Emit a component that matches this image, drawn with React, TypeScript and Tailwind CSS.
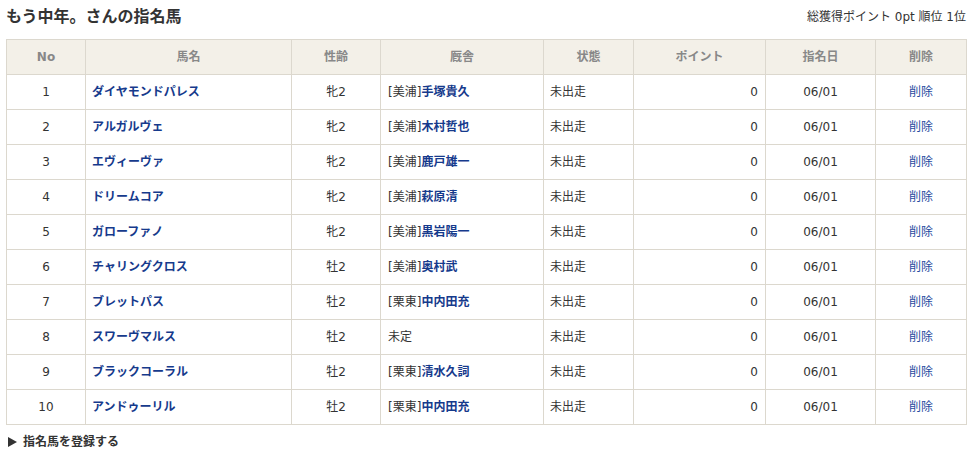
import React from "react";

const rows = [
  { no: 1, name: "ダイヤモンドパレス", sex: "牝2", area: "美浦", trainer: "手塚貴久" },
  { no: 2, name: "アルガルヴェ", sex: "牝2", area: "美浦", trainer: "木村哲也" },
  { no: 3, name: "エヴィーヴァ", sex: "牝2", area: "美浦", trainer: "鹿戸雄一" },
  { no: 4, name: "ドリームコア", sex: "牝2", area: "美浦", trainer: "萩原清" },
  { no: 5, name: "ガローファノ", sex: "牝2", area: "美浦", trainer: "黒岩陽一" },
  { no: 6, name: "チャリングクロス", sex: "牡2", area: "美浦", trainer: "奥村武" },
  { no: 7, name: "ブレットパス", sex: "牡2", area: "栗東", trainer: "中内田充" },
  { no: 8, name: "スワーヴマルス", sex: "牡2", area: "", trainer: "" },
  { no: 9, name: "ブラックコーラル", sex: "牡2", area: "栗東", trainer: "清水久詞" },
  { no: 10, name: "アンドゥーリル", sex: "牡2", area: "栗東", trainer: "中内田充" },
];

const font = { fontFamily: '"DejaVu Sans", "Noto Sans CJK JP", sans-serif' };

export default function App() {
  const th = "border border-[#dcd8ce] bg-[#f3f0e8] text-[#888] font-bold text-[12px] text-center h-[35px] p-0";
  const td = "border border-[#dcd8ce] text-[12px] text-[#333] h-[35px] py-0";
  return (
    <div className="w-[974px] h-[452px] bg-white text-[#333]" style={font}>
      <div className="px-[6px] pt-[6px]">
        <div className="flex justify-between items-center h-[22px] mb-[11px]">
          <h1 className="text-[16px] font-bold text-[#333] leading-none">もう中年。さんの指名馬</h1>
          <div className="text-[12px] leading-none pr-[2px]">総獲得ポイント 0pt 順位 1位</div>
        </div>
        <table className="border-collapse w-[960px] table-fixed">
          <colgroup>
            <col className="w-[79px]" />
            <col className="w-[206px]" />
            <col className="w-[89px]" />
            <col className="w-[163px]" />
            <col className="w-[90px]" />
            <col className="w-[132px]" />
            <col className="w-[110px]" />
            <col className="w-[91px]" />
          </colgroup>
          <thead>
            <tr>
              <th className={th}>No</th>
              <th className={th}>馬名</th>
              <th className={th}>性齢</th>
              <th className={th}>厩舎</th>
              <th className={th}>状態</th>
              <th className={th}>ポイント</th>
              <th className={th}>指名日</th>
              <th className={th}>削除</th>
            </tr>
          </thead>
          <tbody>
            {rows.map((r) => (
              <tr key={r.no}>
                <td className={`${td} text-center`}>{r.no}</td>
                <td className={`${td} pl-[6px]`}>
                  <a className="text-[#163a8c] font-bold">{r.name}</a>
                </td>
                <td className={`${td} text-center`}>{r.sex}</td>
                <td className={`${td} pl-[7px]`}>
                  {r.area ? (
                    <>
                      [{r.area}]<a className="text-[#163a8c] font-bold">{r.trainer}</a>
                    </>
                  ) : (
                    "未定"
                  )}
                </td>
                <td className={`${td} pl-[6px]`}>未出走</td>
                <td className={`${td} text-right pr-[7px]`}>0</td>
                <td className={`${td} text-center`}>06/01</td>
                <td className={`${td} text-center`}>
                  <a className="text-[#1f4aa0]">削除</a>
                </td>
              </tr>
            ))}
          </tbody>
        </table>
        <div className="mt-[8px] flex items-center text-[12px] font-bold text-[#333] pl-[2px]">
          <svg width="9" height="10" viewBox="0 0 9 10" className="mr-[6px]">
            <polygon points="0,0 9,5 0,10" fill="#333" />
          </svg>
          <span>指名馬を登録する</span>
        </div>
      </div>
    </div>
  );
}
